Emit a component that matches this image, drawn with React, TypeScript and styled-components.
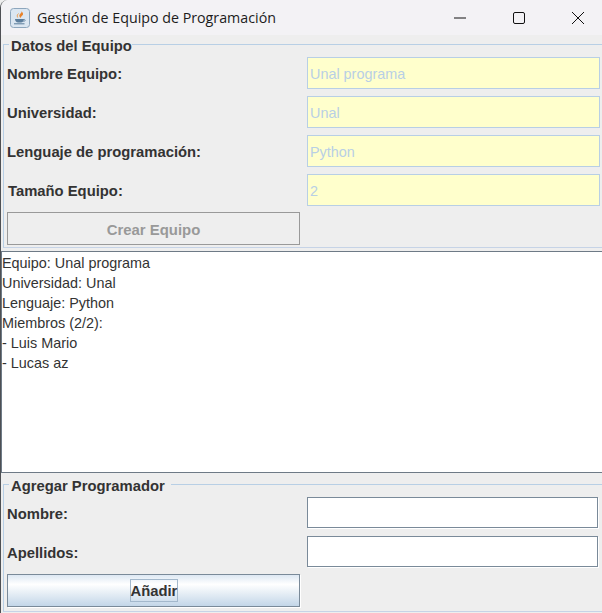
import React from "react";
import styled, { createGlobalStyle } from "styled-components";

const GlobalStyle = createGlobalStyle`
  html, body {
    margin: 0;
    padding: 0;
    background: #eeeeee;
    overflow: hidden;
  }
`;

const JavaIcon = () => (
  <svg width="20" height="20" viewBox="0 0 20 20">
    <rect x="0.5" y="0.5" width="19" height="19" rx="3" fill="#dbe6f1" stroke="#8da6bd" />
    <path d="M11.5 3c1 2-3 3-2 5.5.3.8.8 1.200 1.200 1.500-.2-1.500 3-3 2.300-4.500-.3-.7-.9-1.500-1.500-2.500z" fill="#e8822a" />
    <path d="M8.500 5.500c-1 1-1.800 2-.8 4" stroke="#ef9a4a" strokeWidth="1" fill="none" />
    <path d="M5 11h9c0 2-1.500 3.500-3 3.500H8c-1.500 0-3-1.500-3-3.500z" fill="#5b7d9c" />
    <path d="M14 11.500c1.500-.3 2 1.500-.6 2" stroke="#5b7d9c" strokeWidth="0.8" fill="none" />
    <path d="M4 15.800h10.500" stroke="#5b7d9c" strokeWidth="1" />
  </svg>
);

const Window = styled.div`
  width: 602px;
  height: 613px;
  box-sizing: border-box;
  border-left: 1px solid #4e5054;
  border-top-left-radius: 8px;
  display: flex;
  flex-direction: column;
  background: #eeeeee;
  font-family: "Liberation Sans", Arial, sans-serif;
  overflow: hidden;
`;

const TitleBar = styled.div`
  height: 35px;
  flex: none;
  display: flex;
  align-items: center;
  padding-left: 9px;
  background: #f3f2f5;
`;

const TitleText = styled.span`
  margin-left: 7px;
  font-family: "Open Sans", sans-serif;
  font-size: 14.25px;
  color: #1c1c1c;
  white-space: nowrap;
`;

const WindowControls = styled.div`
  margin-left: auto;
  margin-right: -5px;
  display: flex;
  height: 100%;
`;

const WindowControl = styled.div`
  width: 59px;
  height: 100%;
  display: flex;
  align-items: center;
  justify-content: center;
`;

const TopPanel = styled.div`
  height: 216px;
  flex: none;
  box-sizing: border-box;
  padding: 0 0 3px 2px;
  display: flex;
`;

const BottomPanel = styled.div`
  flex: 1;
  box-sizing: border-box;
  padding: 2px 0 1px 2px;
  display: flex;
`;

const TitledBox = styled.fieldset`
  flex: 1;
  min-width: 0;
  margin: 0 -4px 0 0;
  padding: 3px 6px 3px 3px;
  border: 1px solid #b8cfe5;
  border-bottom-color: #c6d3e6;
  display: flex;
  flex-direction: column;
  box-sizing: border-box;
`;

const BoxTitle = styled.legend<{ $wide?: boolean }>`
  margin-left: 2px;
  padding: ${(p) => (p.$wide ? "3px 6px 0 2px" : "3px 0 0 2px")};
  font-size: 14.8px;
  font-weight: bold;
  line-height: 16px;
  color: #333333;
`;

const FormGrid = styled.div<{ $rowGap: number }>`
  display: grid;
  grid-template-columns: 293px 1fr;
  column-gap: 7px;
  row-gap: ${(p) => p.$rowGap}px;
  align-items: center;
`;

const FieldLabel = styled.label<{ $indent?: boolean }>`
  font-size: 14.8px;
  font-weight: bold;
  color: #333333;
  padding-top: 2px;
  padding-left: ${(p) => (p.$indent ? 1 : 0)}px;
`;

const LockedInput = styled.input`
  width: 293px;
  height: 32px;
  box-sizing: border-box;
  margin: 0;
  padding: 2px 2px 0;
  border: 1px solid #b8cfe5;
  background: #ffffcc;
  font-family: "Liberation Sans", Arial, sans-serif;
  font-size: 14.4px;
  color: #b8cfe5;
  opacity: 1;
  -webkit-text-fill-color: #b8cfe5;
`;

const EntryInput = styled.input`
  width: 291px;
  height: 31px;
  box-sizing: border-box;
  margin: 0;
  padding: 0 2px;
  border: 1px solid #7a8a99;
  box-shadow: 1px 1px 0 #ffffff;
  background: #ffffff;
  outline: none;
  font-family: "Liberation Sans", Arial, sans-serif;
  font-size: 14px;
`;

const CreateButton = styled.button`
  width: 293px;
  height: 33px;
  flex: none;
  margin-top: 6px;
  padding: 2px 0 0;
  box-sizing: border-box;
  border: 1px solid #999999;
  background: #eeeeee;
  font-family: "Liberation Sans", Arial, sans-serif;
  font-size: 14.9px;
  font-weight: bold;
  color: #999999;
`;

const AddButton = styled.button`
  width: 293px;
  height: 33px;
  flex: none;
  margin-top: 7px;
  padding: 0;
  box-sizing: border-box;
  border: 1px solid #7a8a99;
  box-shadow: 1px 1px 0 #ffffff;
  background: linear-gradient(#dde8f3 0%, #ffffff 30%, #c3d6e8 100%);
  font-family: "Liberation Sans", Arial, sans-serif;
  font-size: 14.8px;
  font-weight: bold;
  color: #333333;
  display: flex;
  align-items: center;
  justify-content: center;
`;

const FocusRing = styled.span`
  display: block;
  width: 48px;
  height: 23px;
  box-sizing: border-box;
  border: 1px solid #a3b8cc;
  line-height: 22px;
  text-align: center;
  white-space: nowrap;
`;

const Output = styled.div`
  height: 222px;
  flex: none;
  box-sizing: border-box;
  border-top: 1px solid #6e7a86;
  border-bottom: 1px solid #6e7a86;
  border-left: 1px solid #6e7a86;
  background: #ffffff;
  padding: 1px 0 0 0;
  font-size: 14.4px;
  line-height: 20px;
  color: #333333;
`;

const OutputLine = styled.div`
  white-space: pre;
`;

const report = [
  "Equipo: Unal programa",
  "Universidad: Unal",
  "Lenguaje: Python",
  "Miembros (2/2):",
  "- Luis Mario",
  "- Lucas az",
];

const teamFields = [
  { label: "Nombre Equipo:", value: "Unal programa" },
  { label: "Universidad:", value: "Unal" },
  { label: "Lenguaje de programación:", value: "Python" },
  { label: "Tamaño Equipo:", value: "2", indent: true },
];

export default function App() {
  return (
    <>
      <GlobalStyle />
      <Window>
        <TitleBar>
          <JavaIcon />
          <TitleText>Gestión de Equipo de Programación</TitleText>
          <WindowControls>
            <WindowControl>
              <svg width="12" height="12" viewBox="0 0 12 12">
                <path d="M0 6h12" stroke="#111" strokeWidth="1" />
              </svg>
            </WindowControl>
            <WindowControl>
              <svg width="12" height="12" viewBox="0 0 12 12">
                <rect x="0.5" y="0.500" width="11" height="11" rx="1.500" fill="none" stroke="#111" />
              </svg>
            </WindowControl>
            <WindowControl>
              <svg width="12" height="12" viewBox="0 0 12 12">
                <path d="M0 0l12 12M12 0L0 12" stroke="#111" strokeWidth="1" />
              </svg>
            </WindowControl>
          </WindowControls>
        </TitleBar>

        <TopPanel>
          <TitledBox>
            <BoxTitle>Datos del Equipo</BoxTitle>
            <FormGrid $rowGap={7}>
              {teamFields.map((f) => (
                <React.Fragment key={f.label}>
                  <FieldLabel $indent={f.indent}>{f.label}</FieldLabel>
                  <LockedInput value={f.value} disabled readOnly />
                </React.Fragment>
              ))}
            </FormGrid>
            <CreateButton disabled>Crear Equipo</CreateButton>
          </TitledBox>
        </TopPanel>

        <Output>
          {report.map((line) => (
            <OutputLine key={line}>{line}</OutputLine>
          ))}
        </Output>

        <BottomPanel>
          <TitledBox>
            <BoxTitle $wide>Agregar Programador</BoxTitle>
            <FormGrid $rowGap={8}>
              <FieldLabel>Nombre:</FieldLabel>
              <EntryInput />
              <FieldLabel>Apellidos:</FieldLabel>
              <EntryInput />
            </FormGrid>
            <AddButton>
              <FocusRing>Añadir</FocusRing>
            </AddButton>
          </TitledBox>
        </BottomPanel>
      </Window>
    </>
  );
}
